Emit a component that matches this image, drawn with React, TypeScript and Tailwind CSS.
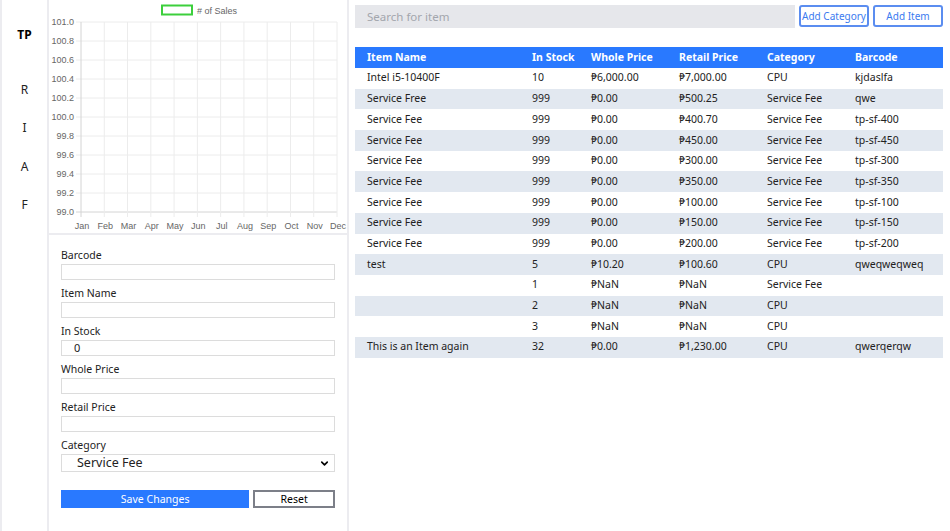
import { ChevronDown } from 'lucide-react';

type Item = {
  name: string;
  stock: string;
  whole: string;
  retail: string;
  category: string;
  barcode: string;
};

const items: Item[] = [
  { name: 'Intel i5-10400F', stock: '10', whole: '₱6,000.00', retail: '₱7,000.00', category: 'CPU', barcode: 'kjdaslfa' },
  { name: 'Service Free', stock: '999', whole: '₱0.00', retail: '₱500.25', category: 'Service Fee', barcode: 'qwe' },
  { name: 'Service Fee', stock: '999', whole: '₱0.00', retail: '₱400.70', category: 'Service Fee', barcode: 'tp-sf-400' },
  { name: 'Service Fee', stock: '999', whole: '₱0.00', retail: '₱450.00', category: 'Service Fee', barcode: 'tp-sf-450' },
  { name: 'Service Fee', stock: '999', whole: '₱0.00', retail: '₱300.00', category: 'Service Fee', barcode: 'tp-sf-300' },
  { name: 'Service Fee', stock: '999', whole: '₱0.00', retail: '₱350.00', category: 'Service Fee', barcode: 'tp-sf-350' },
  { name: 'Service Fee', stock: '999', whole: '₱0.00', retail: '₱100.00', category: 'Service Fee', barcode: 'tp-sf-100' },
  { name: 'Service Fee', stock: '999', whole: '₱0.00', retail: '₱150.00', category: 'Service Fee', barcode: 'tp-sf-150' },
  { name: 'Service Fee', stock: '999', whole: '₱0.00', retail: '₱200.00', category: 'Service Fee', barcode: 'tp-sf-200' },
  { name: 'test', stock: '5', whole: '₱10.20', retail: '₱100.60', category: 'CPU', barcode: 'qweqweqweq' },
  { name: '', stock: '1', whole: '₱NaN', retail: '₱NaN', category: 'Service Fee', barcode: '' },
  { name: '', stock: '2', whole: '₱NaN', retail: '₱NaN', category: 'CPU', barcode: '' },
  { name: '', stock: '3', whole: '₱NaN', retail: '₱NaN', category: 'CPU', barcode: '' },
  { name: 'This is an Item again', stock: '32', whole: '₱0.00', retail: '₱1,230.00', category: 'CPU', barcode: 'qwerqerqw' },
];

const months = ['Jan', 'Feb', 'Mar', 'Apr', 'May', 'Jun', 'Jul', 'Aug', 'Sep', 'Oct', 'Nov', 'Dec'];
const ticks = ['101.0', '100.8', '100.6', '100.4', '100.2', '100.0', '99.8', '99.6', '99.4', '99.2', '99.0'];

function SalesChart() {
  const left = 32;
  const right = 288;
  const top = 22;
  const bottom = 212;
  const stepX = (right - left) / 11;
  const stepY = (bottom - top) / 10;
  return (
    <svg width="298" height="234" className="block overflow-visible" style={{ fontFamily: '"Liberation Sans", Arial, sans-serif' }}>
      {/* legend */}
      <rect x="113" y="5.5" width="30" height="9" fill="none" stroke="#3ccf3c" strokeWidth="2" />
      <text x="148" y="13.5" fontSize="9" fill="#666">
        # of Sales
      </text>
      {/* horizontal grid */}
      {ticks.map((t, i) => (
        <g key={t}>
          <line x1={left - 5} x2={right} y1={top + i * stepY} y2={top + i * stepY} stroke={i === 10 ? '#d4d4d4' : '#ececec'} />
          <text x={left - 7} y={top + i * stepY + 3} fontSize="9" fill="#666" textAnchor="end">
            {t}
          </text>
        </g>
      ))}
      {/* vertical grid */}
      {months.map((m, i) => (
        <g key={m}>
          <line x1={left + i * stepX} x2={left + i * stepX} y1={top} y2={bottom + 5} stroke={i === 0 ? '#d4d4d4' : '#ececec'} />
          <text x={left + 1 + i * stepX} y={bottom + 17} fontSize="9" fill="#666" textAnchor="middle">
            {m}
          </text>
        </g>
      ))}
    </svg>
  );
}

function Field({ label, value }: { label: string; value?: string }) {
  return (
    <div className="flex flex-col">
      <label className="text-[10.5px] leading-[14px] text-[#222] mb-[2px]">{label}</label>
      <div className="h-[16px] border border-[#dcdcdc] bg-white text-[11px] leading-[14px] pl-[12px] text-[#222]">{value}</div>
    </div>
  );
}

export default function App() {
  return (
    <div
      className="flex w-[950px] h-[531px] bg-white overflow-hidden text-[#222]"
      style={{ fontFamily: '"Noto Sans", "Open Sans", sans-serif' }}
    >
      {/* Sidebar */}
      <div className="w-[49px] shrink-0 border-l-2 border-r-2 border-[#ececf0] flex flex-col items-center pt-[27px] text-[12px]">
        <div className="h-[16px] leading-[16px] font-bold text-black">TP</div>
        <div className="mt-[39px] h-[16px] leading-[16px]">R</div>
        <div className="mt-[22px] h-[16px] leading-[16px]">I</div>
        <div className="mt-[23px] h-[16px] leading-[16px]">A</div>
        <div className="mt-[22px] h-[16px] leading-[16px]">F</div>
      </div>

      {/* Chart + form panel */}
      <div className="w-[300px] shrink-0 border-r-2 border-[#ececf0] flex flex-col">
        <div className="h-[235px] border-b-2 border-[#ececf0]">
          <SalesChart />
        </div>
        <div className="flex flex-col gap-[6px] px-[12px] pt-[13px]">
          <Field label="Barcode" />
          <Field label="Item Name" />
          <Field label="In Stock" value="0" />
          <Field label="Whole Price" />
          <Field label="Retail Price" />
          <div className="flex flex-col">
            <label className="text-[10.5px] leading-[14px] text-[#222] mb-[2px]">Category</label>
            <div className="h-[18px] border border-[#dcdcdc] bg-white flex items-center justify-between pl-[15px] pr-[4px] text-[12.5px] text-[#222]">
              <span>Service Fee</span>
              <ChevronDown size={11} strokeWidth={3.5} className="text-black" />
            </div>
          </div>
          <div className="flex gap-[4px] mt-[12px]">
            <button className="w-[189px] h-[18px] bg-[#2979ff] text-white text-[10.5px] leading-[18px]">Save Changes</button>
            <button className="w-[82px] h-[18px] border-2 border-[#7c7f88] text-[10.5px] leading-[14px] text-black">Reset</button>
          </div>
        </div>
      </div>

      {/* Inventory */}
      <div className="flex-1 pl-[6px] pr-[7px] pt-[5px]">
        <div className="flex gap-[4px] h-[23px]">
          <div className="flex-1 bg-[#e6e7eb] text-[11.5px] text-[#a3a6ad] leading-[23px] pl-[12px]">Search for item</div>
          <button className="w-[70px] h-[22px] border-2 border-[#5b8df0] rounded-[3px] text-[10px] text-[#3b7bf0] leading-[18px]">Add Category</button>
          <button className="w-[70px] h-[22px] border-2 border-[#5b8df0] rounded-[3px] text-[10px] text-[#3b7bf0] leading-[18px]">Add Item</button>
        </div>

        <table className="w-full mt-[19px] border-collapse text-[10.5px]">
          <thead>
            <tr className="bg-[#2979ff] text-white h-[21px] text-left">
              <th className="pl-[12px] w-[177px] font-bold">Item Name</th>
              <th className="w-[59px] font-bold">In Stock</th>
              <th className="w-[88px] font-bold">Whole Price</th>
              <th className="w-[88px] font-bold">Retail Price</th>
              <th className="w-[88px] font-bold">Category</th>
              <th className="font-bold">Barcode</th>
            </tr>
          </thead>
          <tbody>
            {items.map((it, i) => (
              <tr key={i} className={`h-[20.7px] ${i % 2 === 1 ? 'bg-[#e2e8f0]' : 'bg-white'}`}>
                <td className="pl-[12px]">{it.name}</td>
                <td>{it.stock}</td>
                <td>{it.whole}</td>
                <td>{it.retail}</td>
                <td>{it.category}</td>
                <td>{it.barcode}</td>
              </tr>
            ))}
          </tbody>
        </table>
      </div>
    </div>
  );
}
